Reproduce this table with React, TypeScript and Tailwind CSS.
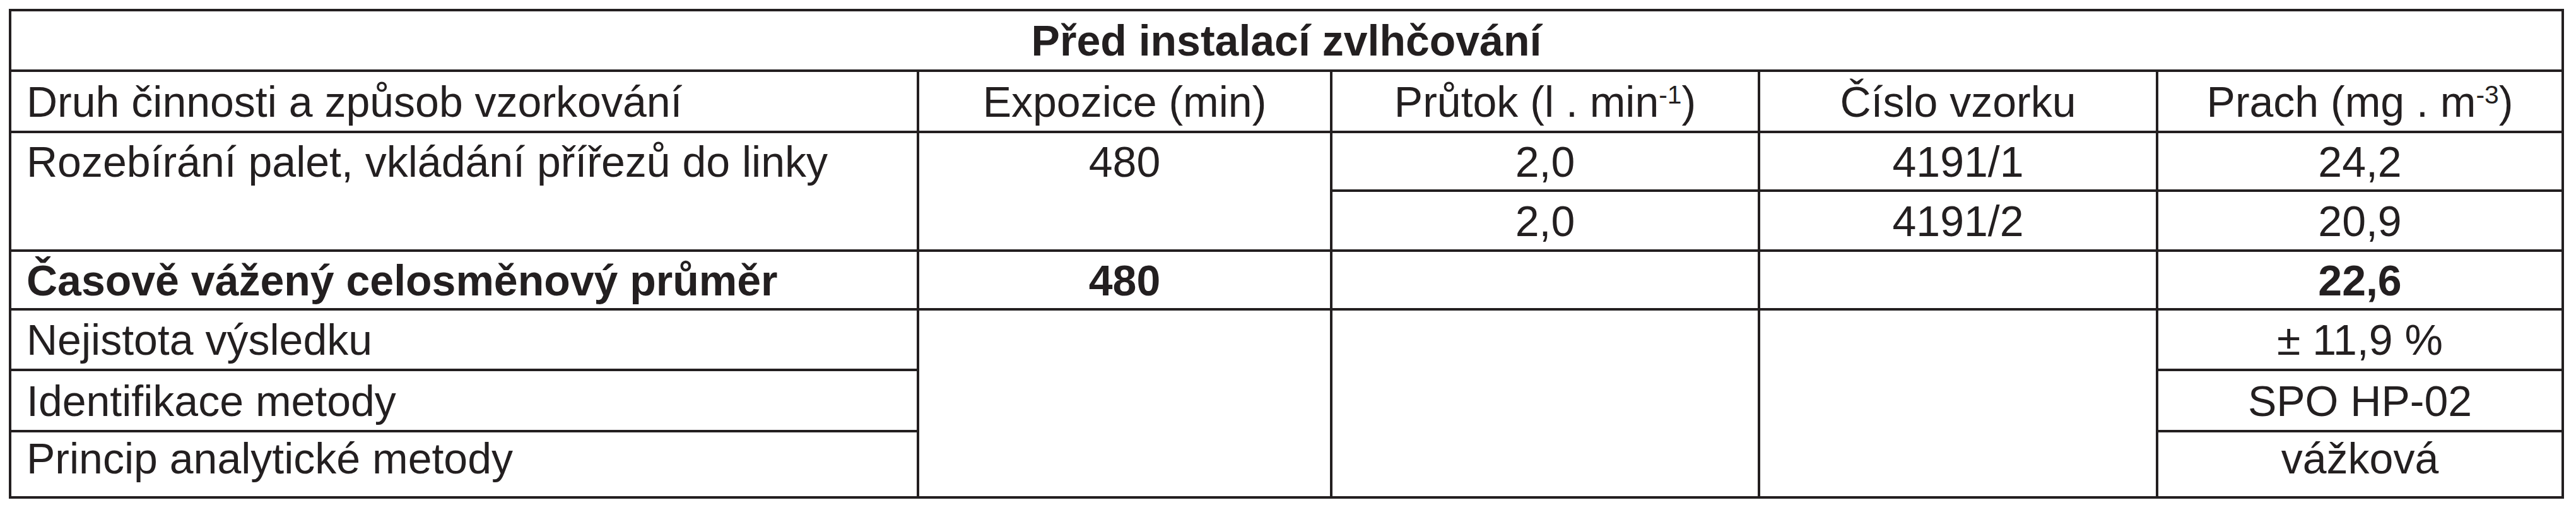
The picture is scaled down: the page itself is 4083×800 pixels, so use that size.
import React from "react";

const cell = "bg-white flex items-center justify-center";
const left = "bg-white flex items-center justify-start pl-[24px]";

export default function App() {
  return (
    <div className="bg-white w-[4083px] h-[800px] pt-[14px] pl-[14px] font-['Liberation_Sans',Arial,sans-serif] text-[68px] leading-[76px] text-[#231f20]">
      <div className="grid w-fit bg-[#231f20] p-[4px] gap-[4px] grid-cols-[1435px_651px_674px_627px_639px] grid-rows-[92px_93px_89px_91px_89px_92px_93px_101px]">
        <div className={`${cell} col-span-5 font-bold`}>Před instalací zvlhčování</div>

        <div className={left}>Druh činnosti a způsob vzorkování</div>
        <div className={cell}>Expozice (min)</div>
        <div className={cell}>
          <span>
            Průtok (l . min<sup className="text-[0.6em]">-1</sup>)
          </span>
        </div>
        <div className={cell}>Číslo vzorku</div>
        <div className={cell}>
          <span>
            Prach (mg . m<sup className="text-[0.6em]">-3</sup>)
          </span>
        </div>

        <div className="bg-white row-span-2 flex flex-col">
          <div className="h-[89px] flex items-center pl-[24px]">Rozebírání palet, vkládání přířezů do linky</div>
        </div>
        <div className="bg-white row-span-2 flex flex-col">
          <div className="h-[89px] flex items-center justify-center">480</div>
        </div>
        <div className={cell}>2,0</div>
        <div className={cell}>4191/1</div>
        <div className={cell}>24,2</div>
        <div className={cell}>2,0</div>
        <div className={cell}>4191/2</div>
        <div className={cell}>20,9</div>

        <div className={`${left} font-bold`}>Časově vážený celosměnový průměr</div>
        <div className={`${cell} font-bold`}>480</div>
        <div className="bg-white"></div>
        <div className="bg-white"></div>
        <div className={`${cell} font-bold`}>22,6</div>

        <div className={left}>Nejistota výsledku</div>
        <div className="bg-white row-span-3"></div>
        <div className="bg-white row-span-3"></div>
        <div className="bg-white row-span-3"></div>
        <div className={cell}>± 11,9 %</div>

        <div className={left}>Identifikace metody</div>
        <div className={cell}>SPO HP-02</div>

        <div className="bg-white flex items-start justify-start pl-[24px] pt-[3px]">Princip analytické metody</div>
        <div className="bg-white flex items-start justify-center pt-[3px]">vážková</div>
      </div>
    </div>
  );
}
